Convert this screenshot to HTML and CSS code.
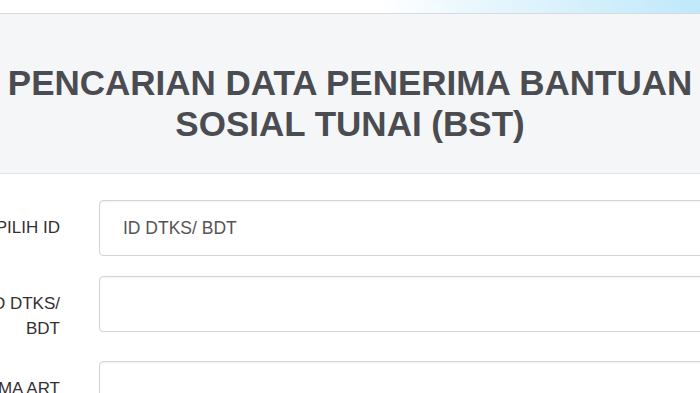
FILE: index.html
```html
<!DOCTYPE html>
<html lang="id">
<head>
<meta charset="utf-8">
<title>Pencarian Data Penerima BST</title>
<link rel="stylesheet" href="styles.css">
</head>
<body>
<div class="topbar"></div>
<header class="panel">
  <h1 class="title">PENCARIAN DATA PENERIMA BANTUAN<br>SOSIAL TUNAI (BST)</h1>
</header>
<form class="form">
  <div class="row">
    <label class="label">PILIH ID</label>
    <div class="control">
      <div class="input select"><span class="placeholder">ID DTKS/ BDT</span></div>
    </div>
  </div>
  <div class="row">
    <label class="label">ID DTKS/ BDT</label>
    <div class="control"><div class="input"></div></div>
  </div>
  <div class="row">
    <label class="label">NAMA ART</label>
    <div class="control"><div class="input"></div></div>
  </div>
</form>
</body>
</html>
```

FILE: styles.css
```css
html, body {
  margin: 0;
  padding: 0;
  background: #ffffff;
  overflow: hidden;
  width: 700px;
  height: 393px;
  font-family: "Liberation Sans", Arial, sans-serif;
}

.topbar {
  height: 13px;
  background: linear-gradient(to right, #ffffff 0%, #ffffff 54%, #e6f6fd 70%, #bfe8fb 100%);
  border-bottom: 1px solid #d9dadb;
}

.panel {
  background: #f5f6f8;
  border-bottom: 1px solid #e2e3e5;
  height: 160px;
  box-sizing: border-box;
  padding-top: 48px;
}

.title {
  margin: 0;
  text-align: center;
  font-size: 35px;
  line-height: 41px;
  font-weight: bold;
  color: #4a4c51;
  white-space: nowrap;
}

.form {
  margin: 26px 0 0 -40px;
}

.row {
  display: grid;
  grid-template-columns: 100px 660px;
  column-gap: 39px;
  align-items: start;
  margin-bottom: 20px;
}

.label {
  padding-top: 16px;
  text-align: right;
  font-size: 17px;
  line-height: 24.5px;
  color: #352f33;
}

.input {
  height: 56px;
  box-sizing: border-box;
  border: 1px solid #d4d4d4;
  border-radius: 4px;
  background: #ffffff;
  box-shadow: inset 0 1px 2px rgba(0, 0, 0, 0.06);
  display: flex;
  align-items: center;
  padding-left: 23px;
}

.placeholder {
  font-size: 17.5px;
  color: #555555;
}
```
